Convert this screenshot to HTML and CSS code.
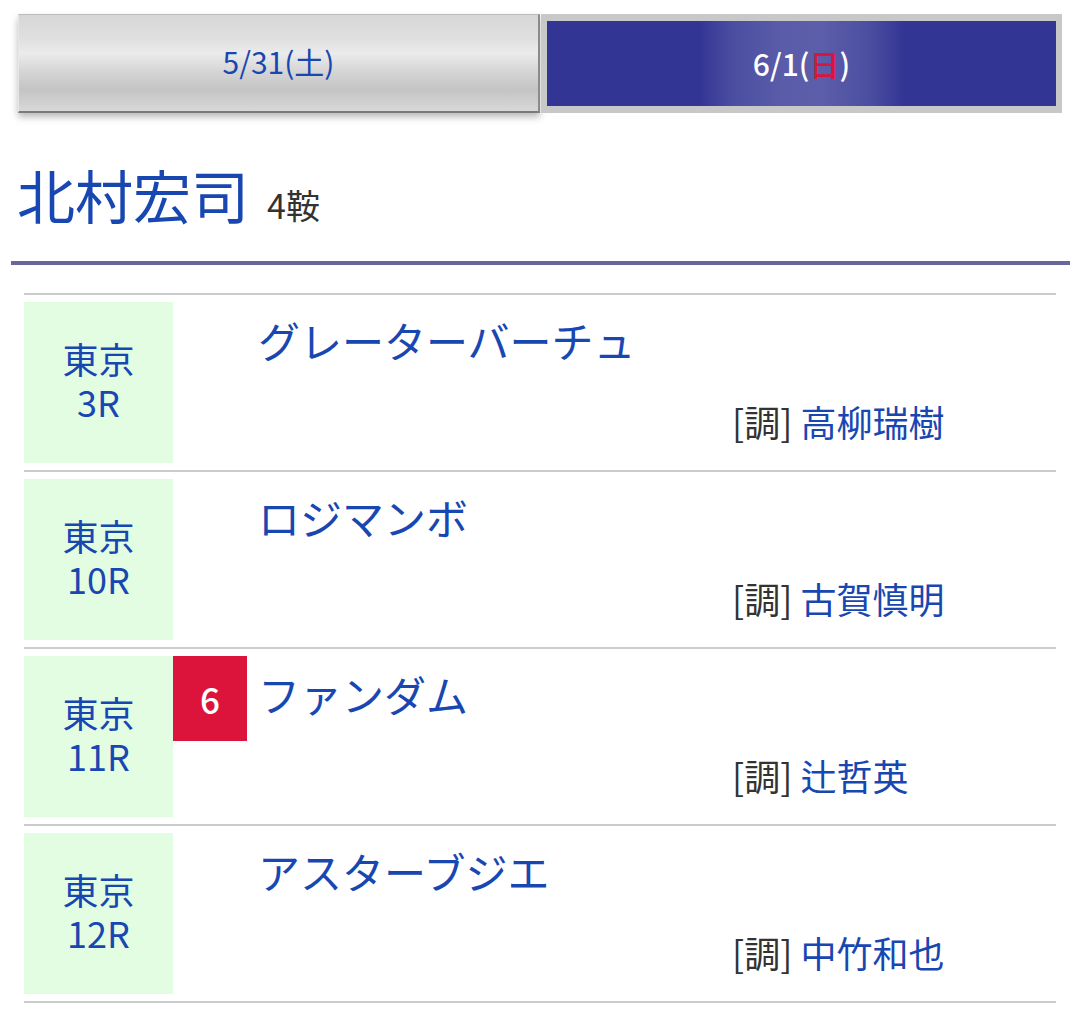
FILE: index.html
```html
<!DOCTYPE html>
<html lang="ja">
<head>
  <meta charset="UTF-8">
  <meta name="viewport" content="width=device-width, initial-scale=1.0">
  <title>北村宏司 騎乗予定</title>
  <link rel="stylesheet" href="styles.css">
</head>
<body>
  <div class="day-tabs">
    <div class="day-tab">5/31(土)</div>
    <div class="day-tab active">
      <div class="day-inner">6/1(<span class="sun">日</span>)</div>
    </div>
  </div>

  <h1 class="jockey">北村宏司<span class="rides">4鞍</span></h1>
  <hr class="rule">

  <ul class="race-list">
    <li class="race">
      <div class="venue"><div>東京</div><div>3R</div></div>
      <div class="badge-col"></div>
      <div class="info">
        <div class="horse">グレーターバーチュ</div>
        <div class="trainer"><span class="tag">[調]</span> 高柳瑞樹</div>
      </div>
    </li>
    <li class="race">
      <div class="venue"><div>東京</div><div>10R</div></div>
      <div class="badge-col"></div>
      <div class="info">
        <div class="horse">ロジマンボ</div>
        <div class="trainer"><span class="tag">[調]</span> 古賀慎明</div>
      </div>
    </li>
    <li class="race">
      <div class="venue"><div>東京</div><div>11R</div></div>
      <div class="badge-col"><div class="badge">6</div></div>
      <div class="info">
        <div class="horse">ファンダム</div>
        <div class="trainer"><span class="tag">[調]</span> 辻哲英</div>
      </div>
    </li>
    <li class="race">
      <div class="venue"><div>東京</div><div>12R</div></div>
      <div class="badge-col"></div>
      <div class="info">
        <div class="horse">アスターブジエ</div>
        <div class="trainer"><span class="tag">[調]</span> 中竹和也</div>
      </div>
    </li>
  </ul>
</body>
</html>
```

FILE: styles.css
```css
body {
  margin: 0;
  padding: 0;
  background: #fff;
  font-family: "Noto Sans CJK JP", "Noto Sans", sans-serif;
  color: #1847b1;
}

/* day tabs */
.day-tabs {
  display: flex;
  margin: 14px 18px 0;
  height: 99px;
}

.day-tab {
  width: 522px;
  display: flex;
  align-items: center;
  justify-content: center;
  padding-bottom: 5px;
  font-size: 30px;
  box-sizing: border-box;
  border-top: 1px solid #bdbdbd;
  border-left: 1px solid #e6e6e6;
  border-right: 2px solid #8a8a8a;
  border-bottom: 2px solid #7a7a7a;
  background: linear-gradient(to bottom, #d6d6d6 0%, #e0e0e0 25%, #ebebeb 40%, #d4d4d4 60%, #c4c4c4 78%, #cfcfcf 90%, #d8d8d8 100%);
  box-shadow: 0 4px 7px rgba(0, 0, 0, 0.28);
}

.day-tab.active {
  width: auto;
  flex: 1;
  border: none;
  box-shadow: none;
  background: #c8c8c8;
  padding: 7px 6px 7px 6px;
  margin-left: 1px;
  color: #fff;
  font-weight: 500;
}

.day-inner {
  width: 100%;
  height: 100%;
  display: flex;
  align-items: center;
  justify-content: center;
  padding-bottom: 2px;
  box-sizing: border-box;
  background: linear-gradient(to right, #333594 0%, #333594 30%, #4a4ca0 36%, #5a5ca9 46%, #5c5eaa 54%, #4a4ca0 64%, #333594 70%, #333594 100%);
}

.sun {
  color: #dc143c;
}

/* jockey heading */
.jockey {
  margin: 47px 0 0;
  padding-left: 17px;
  font-size: 58px;
  font-weight: 400;
  line-height: 68px;
}

.rides {
  font-size: 34px;
  color: #333;
  margin-left: 18px;
}

.rule {
  margin: 22px 10px 0 11px;
  border: none;
  height: 4px;
  background: #67679b;
}

/* race rows */
.race-list {
  list-style: none;
  margin: 28px 24px 0;
  padding: 0;
  border-bottom: 2px solid #cccccc;
}

.race {
  display: grid;
  grid-template-columns: 149px 74px 1fr;
  border-top: 2px solid #cccccc;
  padding: 7px 0 7px;
}

.venue {
  height: 161px;
  box-sizing: border-box;
  padding-bottom: 6px;
  background: #e3fde3;
  display: flex;
  flex-direction: column;
  align-items: center;
  justify-content: center;
  text-align: center;
  font-size: 36px;
  line-height: 43px;
}

.badge {
  height: 85px;
  background: #dc143c;
  color: #fff;
  font-size: 35px;
  font-weight: 500;
  display: flex;
  align-items: center;
  justify-content: center;
}

.horse {
  margin-top: 13px;
  padding-left: 11px;
  font-size: 42px;
  line-height: 50px;
}

.trainer {
  margin-top: 34px;
  padding-left: 485px;
  font-size: 36px;
  line-height: 44px;
}

.tag {
  color: #333;
}
```
